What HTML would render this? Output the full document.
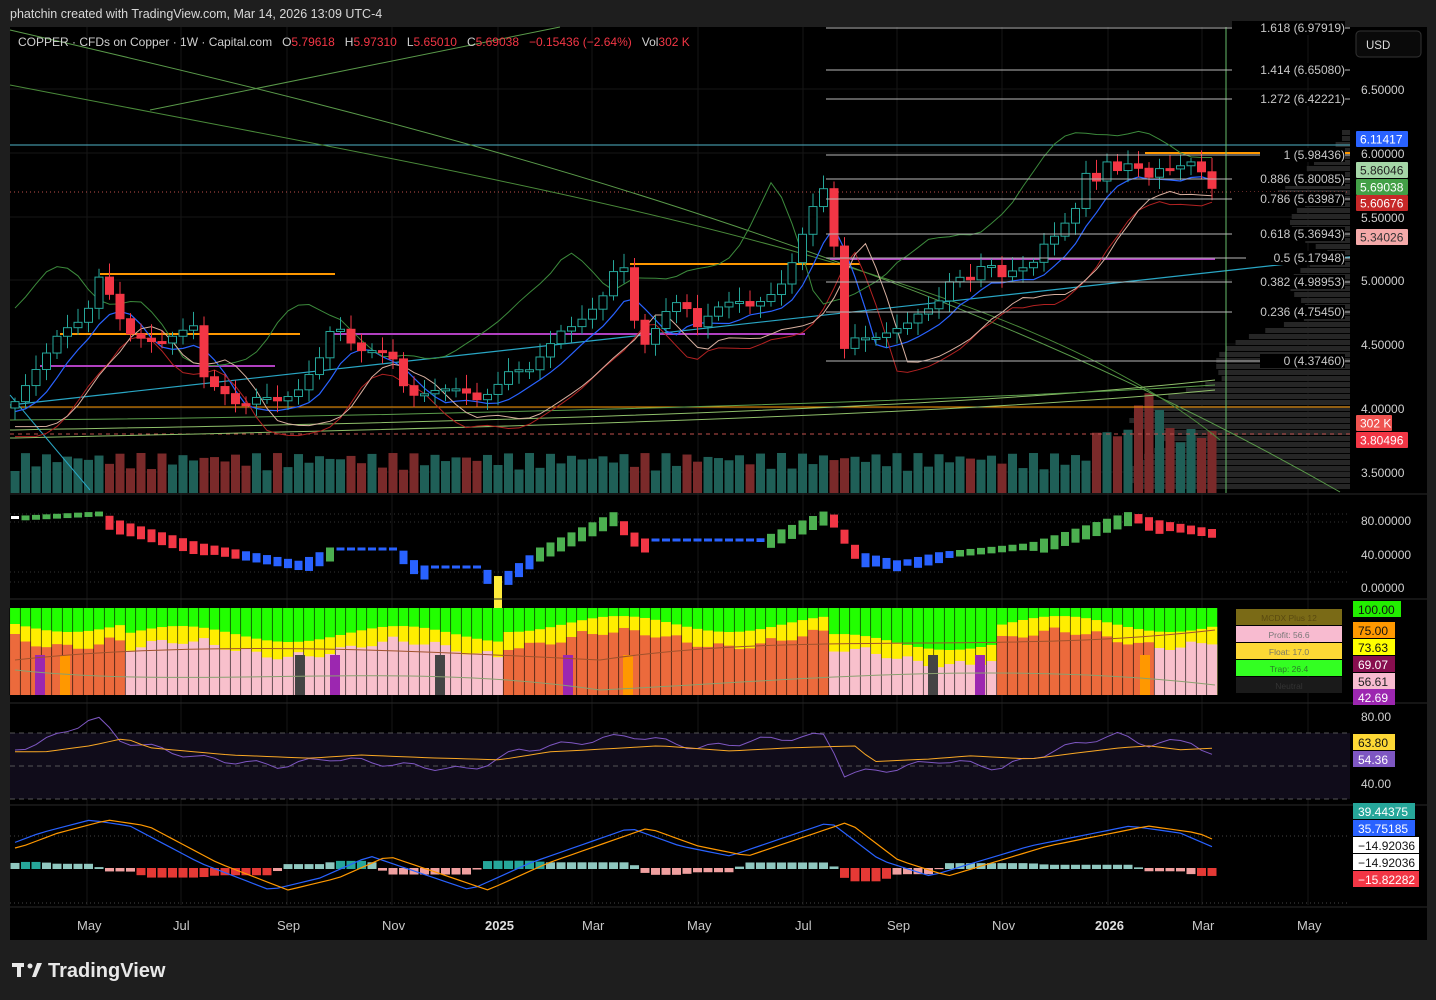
<!DOCTYPE html>
<html><head><meta charset="utf-8">
<style>
html,body{margin:0;padding:0;background:#1e1e1e;width:1436px;height:1000px;overflow:hidden;font-family:"Liberation Sans",sans-serif}
svg{position:absolute;left:0;top:0}
text{font-family:"Liberation Sans",sans-serif}
</style></head><body>
<svg id="s" width="1436" height="1000" xmlns="http://www.w3.org/2000/svg">
<rect x="0" y="0" width="1436" height="1000" fill="#1e1e1e"/>
<rect x="10" y="27" width="1417" height="913" fill="#000"/>
<text x="10" y="18" fill="#d8d8d8" font-size="12.5">phatchin created with TradingView.com, Mar 14, 2026 13:09 UTC-4</text>
<g id="grid" stroke="#161616" stroke-width="1"></g>
<g id="main"></g>
<g id="over"></g>
<g stroke="#2a2a2a" stroke-width="1">
<line x1="10" y1="494" x2="1427" y2="494"/><line x1="10" y1="599" x2="1427" y2="599"/>
<line x1="10" y1="703" x2="1427" y2="703"/><line x1="10" y1="805" x2="1427" y2="805"/>
<line x1="10" y1="907" x2="1427" y2="907"/>
</g>
<rect x="1427" y="27" width="9" height="913" fill="#1e1e1e"/>
<text x="18" y="46" fill="#d0d0d0" font-size="12" style="white-space:pre">COPPER · CFDs on Copper · 1W · Capital.com   O<tspan fill="#f23645">5.79618</tspan>   H<tspan fill="#f23645">5.97310</tspan>   L<tspan fill="#f23645">5.65010</tspan>   C<tspan fill="#f23645">5.69038   −0.15436 (−2.64%)</tspan>   Vol<tspan fill="#f23645">302 K</tspan></text>
<rect x="1356" y="31" width="65" height="26" rx="4" fill="#0a0a0a" stroke="#333"/>
<text x="1366" y="49" fill="#ddd" font-size="11.5">USD</text>
<g id="axis" font-size="12" fill="#d0d0d0"></g>
<g font-size="13" fill="#c8c8c8">
<text x="77" y="930">May</text><text x="173" y="930">Jul</text><text x="277" y="930">Sep</text><text x="382" y="930">Nov</text><text x="485" y="930" font-weight="bold" fill="#e0e0e0">2025</text><text x="582" y="930">Mar</text><text x="687" y="930">May</text><text x="795" y="930">Jul</text><text x="887" y="930">Sep</text><text x="992" y="930">Nov</text><text x="1095" y="930" font-weight="bold" fill="#e0e0e0">2026</text><text x="1192" y="930">Mar</text><text x="1297" y="930">May</text>
</g>
<rect x="12" y="963" width="12" height="4" fill="#e8e8e8"/><rect x="17" y="963" width="4" height="14" fill="#e8e8e8"/><circle cx="30" cy="966" r="2.5" fill="#e8e8e8"/><path d="M32 977 L37 963 L42 963 L36 977Z" fill="#e8e8e8"/>
<text x="48" y="977" fill="#e8e8e8" font-size="20" font-weight="bold">TradingView</text>
</svg>
<script>
var S='http://www.w3.org/2000/svg';
function el(g,t,a){var e=document.createElementNS(S,t);for(var k in a)e.setAttribute(k,a[k]);document.getElementById(g).appendChild(e);return e;}
function tx(g,x,y,s,a){var e=el(g,'text',Object.assign({x:x,y:y},a||{}));e.textContent=s;return e;}
function Y(p){return 153+(6-p)*127.5;}
function mk(arr){return function(x){if(x<=arr[0][0])return arr[0][1];for(var i=1;i<arr.length;i++){if(x<=arr[i][0]){var a=arr[i-1],b=arr[i];return a[1]+(b[1]-a[1])*(x-a[0])/(b[0]-a[0]);}}return arr[arr.length-1][1];};}
[87,181,287,392,498,592,698,803,897,1002,1108,1202,1308].forEach(function(x){el('grid','line',{x1:x,y1:27,x2:x,y2:905});});
[89,153,217,280,344,408,472].forEach(function(y){el('grid','line',{x1:10,y1:y,x2:1350,y2:y});});
for(var y=130;y<490;y+=6){var w=20+Math.abs(Math.sin(y*0.05))*40+(y>300&&y<420?(y-300)*1.4:0)+(y>=420?160:0);if(y<200)w=Math.max(8,(y-130)*1.2);el('main','rect',{x:1350-w,y:y,width:w,height:5,fill:'#262626'});}
var kp=[[15,4.05],[40,4.35],[60,4.6],[85,4.7],[100,5.05],[115,4.8],[125,4.6],[140,4.55],[160,4.5],[180,4.6],[195,4.65],[205,4.2],[220,4.15],[240,4.0],[260,4.1],[280,4.05],[300,4.15],[320,4.4],[335,4.7],[345,4.55],[360,4.45],[380,4.45],[400,4.35],[405,4.1],[420,4.1],[440,4.15],[460,4.15],[480,4.05],[500,4.2],[510,4.3],[530,4.3],[545,4.45],[560,4.6],[575,4.65],[590,4.75],[605,4.9],[615,5.1],[625,5.1],[640,4.45],[650,4.55],[665,4.75],[680,4.85],[690,4.75],[700,4.6],[710,4.75],[720,4.8],[735,4.85],[750,4.8],[765,4.85],[780,4.95],[790,5.1],[800,5.3],[810,5.55],[820,5.65],[830,5.85],[840,4.4],[850,4.55],[860,4.55],[875,4.55],[890,4.6],[905,4.65],[920,4.75],[935,4.8],[945,4.9],[955,5.1],[965,4.95],[975,5.05],[985,5.15],[995,5.1],[1005,5.0],[1015,5.1],[1025,5.1],[1035,5.15],[1045,5.3],[1055,5.35],[1065,5.45],[1075,5.55],[1085,5.85],[1095,5.75],[1105,5.95],[1115,5.85],[1125,5.9],[1135,5.95],[1145,5.75],[1155,5.9],[1165,5.85],[1175,5.9],[1185,5.9],[1195,5.95],[1205,5.8],[1215,5.69]];
var interp=mk(kp);
var prev=4.0;var closes=[];
for(var x=15;x<=1215;x+=10.5){var c=interp(x);closes.push([x,c,prev]);prev=c;}
closes.forEach(function(d,i){var up=d[1]>=d[2];var h=22+Math.abs(Math.sin(i*1.7))*18+(d[0]>1090?25:0)+(d[0]>1130&&d[0]<1160?35:0);el('main','rect',{x:d[0]-4.5,y:493-h,width:9,height:h,fill:up?'#1f5f57':'#7a2a2a'});});
el('main','line',{x1:10,y1:145,x2:1350,y2:145,stroke:'#4fb3c8','stroke-width':1});
el('main','line',{x1:10,y1:192,x2:1350,y2:192,stroke:'#c0504d','stroke-width':1,'stroke-dasharray':'1 3'});
el('main','line',{x1:10,y1:407,x2:1350,y2:407,stroke:'#ff9800','stroke-width':1});
el('main','line',{x1:10,y1:434,x2:1350,y2:434,stroke:'#c0504d','stroke-width':1,'stroke-dasharray':'4 4'});
el('main','path',{d:'M10 30 C400 120 900 240 1340 492',stroke:'#5a9a4a','stroke-width':1,fill:'none'});
el('main','path',{d:'M10 85 C500 180 1000 260 1220 440',stroke:'#4a8a3a','stroke-width':1,fill:'none'});
el('main','path',{d:'M150 110 L560 27',stroke:'#5a9a4a','stroke-width':1,fill:'none'});
el('main','path',{d:'M10 405 L1350 257',stroke:'#29a6c4','stroke-width':1.2,fill:'none'});
el('main','path',{d:'M10 430 C300 425 900 415 1215 380',stroke:'#8fbf6a','stroke-width':1,fill:'none'});
el('main','path',{d:'M10 438 C300 432 900 420 1215 390',stroke:'#8fbf6a','stroke-width':1,fill:'none'});
el('main','path',{d:'M10 420 C300 418 900 405 1215 385',stroke:'#5c9e4c','stroke-width':1,fill:'none'});
el('main','path',{d:'M10 395 L90 490',stroke:'#29a6c4','stroke-width':1,fill:'none'});
el('main','line',{x1:100,y1:274,x2:335,y2:274,stroke:'#ff9800','stroke-width':2});
el('main','line',{x1:60,y1:334,x2:300,y2:334,stroke:'#ff9800','stroke-width':2});
el('main','line',{x1:40,y1:366,x2:275,y2:366,stroke:'#b040c0','stroke-width':2});
el('main','line',{x1:330,y1:334,x2:805,y2:334,stroke:'#b040c0','stroke-width':2});
el('main','line',{x1:630,y1:264,x2:860,y2:264,stroke:'#ff9800','stroke-width':2});
el('main','line',{x1:830,y1:259,x2:1215,y2:259,stroke:'#b040c0','stroke-width':2});
el('main','line',{x1:1145,y1:153,x2:1350,y2:153,stroke:'#ff9800','stroke-width':2});
el('main','line',{x1:1226,y1:27,x2:1226,y2:493,stroke:'#66bb6a','stroke-width':1});
// smooth bands
function smooth(x,off){var s=0,n=0;for(var k=-40;k<=0;k+=5){s+=interp(x+k-off);n++;}return s/n;}
var blue='',red='',green='',pink='';
closes.forEach(function(d,i){var xs=d[0];blue+=(i?'L':'M')+xs+' '+(Y(smooth(xs,0))+10);red+=(i?'L':'M')+xs+' '+(Y(smooth(xs,20))+35);green+=(i?'L':'M')+xs+' '+(Y(smooth(xs,-60))-35);pink+=(i?'L':'M')+xs+' '+(Y(smooth(xs,30))+25);});
el('main','path',{d:blue,stroke:'#2962ff','stroke-width':1.2,fill:'none'});
el('main','path',{d:red,stroke:'#b22222','stroke-width':1,fill:'none'});
el('main','path',{d:green,stroke:'#3c8a3c','stroke-width':1,fill:'none'});
el('main','path',{d:pink,stroke:'#d8b0a0','stroke-width':1,fill:'none'});
closes.forEach(function(d,i){var o=d[2],c=d[1];var up=c>=o;var yo=Y(o),yc=Y(c);var top=Math.min(yo,yc),h=Math.max(2,Math.abs(yo-yc));var hi=top-4-Math.abs(Math.sin(i*2.3))*10,lo=top+h+4+Math.abs(Math.cos(i*1.9))*8;
el('main','line',{x1:d[0],y1:hi,x2:d[0],y2:lo,stroke:up?'#26a69a':'#f23645'});
el('main','rect',{x:d[0]-4,y:top,width:8,height:h,fill:up?'#000':'#f23645',stroke:up?'#26a69a':'#f23645','stroke-width':1});});
var fib=[['1.618 (6.97919)',28],['1.414 (6.65080)',70],['1.272 (6.42221)',99],['1 (5.98436)',155],['0.886 (5.80085)',179],['0.786 (5.63987)',199],['0.618 (5.36943)',234],['0.5 (5.17948)',258],['0.382 (4.98953)',282],['0.236 (4.75450)',312],['0 (4.37460)',361]];
fib.forEach(function(f){el('over','line',{x1:826,y1:f[1],x2:1350,y2:f[1],stroke:'#b8b8b8','stroke-width':1});var w=f[0].length*7+8;el('over','rect',{x:1345-w,y:f[1]-7,width:w,height:14,fill:'#000'});tx('over',1345,f[1]+4,f[0],{fill:'#c8c8c8','font-size':12,'text-anchor':'end'});});
[['6.50000',89],['6.00000',153],['5.50000',217],['5.00000',280],['4.50000',344],['4.00000',408],['3.50000',472]].forEach(function(a){tx('axis',1361,a[1]+5,a[0],{});});
function tag(x,y,w,bg,fg,s){el('axis','rect',{x:x,y:y-8,width:w,height:16,fill:bg,rx:1});tx('axis',x+4,y+4.5,s,{fill:fg});}
tag(1356,139,52,'#2962ff','#fff','6.11417');tag(1356,170,52,'#a5d6a7','#222','5.86046');tag(1356,187,52,'#43a047','#fff','5.69038');tag(1356,203,52,'#c62828','#fff','5.60676');tag(1356,237,52,'#f4a9a9','#333','5.34026');tag(1356,423,36,'#ef5350','#fff','302 K');tag(1356,440,52,'#f23645','#fff','3.80496');
// pane2
var ip2=mk([[15,80],[100,85],[120,75],[200,50],[250,40],[300,30],[330,45],[400,45],[420,25],[480,25],[500,12],[540,45],[615,85],[640,55],[760,55],[830,88],[860,40],[900,30],[940,40],[1030,50],[1130,85],[1160,75],[1215,65]]);
[514,522,572,582].forEach(function(y){el('over','line',{x1:10,y1:y,x2:1350,y2:y,stroke:'#333','stroke-dasharray':'1 3'});});
var pv=80;closes.forEach(function(d){var v=ip2(d[0]);var up=v>=pv;var col=up?'#4caf50':'#f23645';if(v<42)col='#2962ff';if(Math.abs(v-pv)<0.6)col=v>60?'#fff':'#2962ff';if(d[0]>490&&d[0]<505)col='#ffeb3b';var y=588-v*0.9;var h=d[0]>490&&d[0]<505?40:Math.min(14,3+Math.abs(v-pv)*3);el('over','rect',{x:d[0]-4,y:y,width:8,height:h,fill:col});pv=v;});
[['80.00000',521],['40.00000',555],['0.00000',588]].forEach(function(a){tx('axis',1361,a[1]+4,a[0],{});});
// MCDX
closes.forEach(function(d,i){var x=d[0]-5.25,w=10.5;var yl=624+Math.sin(i*0.3)*8+(d[0]>830&&d[0]<1000?18:0)+(d[0]>120&&d[0]<500?10:0);var rt=yl+10+Math.abs(Math.sin(i*0.7))*8;
var pinkz=(d[0]>130&&d[0]<500)||(d[0]>830&&d[0]<1000)||d[0]>1150;
el('over','rect',{x:x,y:608,width:w,height:87,fill:'#22ff00'});el('over','rect',{x:x,y:yl,width:w,height:695-yl,fill:'#ffee00'});
el('over','rect',{x:x,y:rt,width:w,height:695-rt,fill:pinkz?'#f8c0cc':'#ec6a3c'});
el('over','line',{x1:x,y1:608,x2:x,y2:695,stroke:'#000','stroke-width':0.6});});
[[40,'#9c27b0'],[300,'#444'],[335,'#9c27b0'],[440,'#444'],[568,'#9c27b0'],[628,'#ff9800'],[65,'#ff9800'],[933,'#444'],[980,'#9c27b0'],[1145,'#ff9800']].forEach(function(a){el('over','rect',{x:a[0]-5,y:655,width:10,height:40,fill:a[1]});});
el('over','path',{d:'M15 660 C200 640 400 650 600 660 C800 630 1000 655 1215 630',stroke:'#a0522d','stroke-width':1,fill:'none'});
el('over','path',{d:'M15 670 C200 690 400 660 600 690 C800 680 1000 660 1215 685',stroke:'#8aa070','stroke-width':1,fill:'none'});
function box(y,bg,fg,s){el('over','rect',{x:1236,y:y,width:106,height:16,fill:bg});tx('over',1289,y+12,s,{fill:fg,'font-size':8.5,'text-anchor':'middle'});}
box(609,'#7a6a16','#5a4a10','MCDX Plus 12');box(626,'#f8bbd0','#777','Profit: 56.6');box(643,'#fdd835','#776','Float: 17.0');box(660,'#33ff22','#2a7a2a','Trap: 26.4');box(677,'#1a1a1a','#333','Neutral');
function tag2(y,w,bg,fg,s){el('axis','rect',{x:1353,y:y-8,width:w,height:16,fill:bg});tx('axis',1358,y+5,s,{fill:fg});}
tag2(609,48,'#22ee00','#111','100.00');tag2(630,42,'#ff9800','#111','75.00');tag2(647,42,'#ffff00','#111','73.63');tag2(664,42,'#880e4f','#fff','69.07');tag2(681,42,'#f8bbd0','#222','56.61');tag2(697,42,'#9c27b0','#fff','42.69');
// RSI
el('over','rect',{x:10,y:733,width:1340,height:66,fill:'#100c1a'});
[733,766,799].forEach(function(y){el('over','line',{x1:10,y1:y,x2:1350,y2:y,stroke:'#555','stroke-dasharray':'5 4'});});
var rsi=mk([[15,750],[60,735],[95,716],[120,740],[200,758],[280,766],[330,758],[400,765],[470,770],[520,750],[560,745],[630,735],[700,748],[760,740],[830,735],[840,775],[900,768],[940,760],[1000,768],[1050,752],[1090,740],[1120,735],[1150,745],[1190,740],[1215,758]]);
var rs='',rm='';closes.forEach(function(d,i){rs+=(i?'L':'M')+d[0]+' '+(rsi(d[0])+Math.sin(i*1.3)*3);rm+=(i?'L':'M')+d[0]+' '+(rsi(d[0]-30)*0.4+753*0.6);});
el('over','path',{d:rs,stroke:'#7e57c2','stroke-width':1,fill:'none'});el('over','path',{d:rm,stroke:'#f9a825','stroke-width':1,fill:'none'});
tx('axis',1361,721,'80.00',{});tx('axis',1361,788,'40.00',{});
tag2(742,42,'#fdd835','#111','63.80');tag2(759,42,'#7e57c2','#fff','54.36');
// MACD
el('over','line',{x1:10,y1:836,x2:1350,y2:836,stroke:'#444','stroke-dasharray':'1 3'});el('over','line',{x1:10,y1:903,x2:1350,y2:903,stroke:'#444','stroke-dasharray':'1 3'});
var mv=mk([[0,20],[40,35],[90,48],[130,42],[200,5],[270,-22],[320,-10],[370,12],[420,-5],[470,-22],[530,5],[630,40],[680,22],[730,12],[830,46],[880,8],[930,-8],[1030,22],[1130,42],[1180,35],[1215,20]]);
var m1='',m2='';closes.forEach(function(d,i){var a=mv(d[0]),b=mv(d[0]-18);m1+=(i?'L':'M')+d[0]+' '+(868-a);m2+=(i?'L':'M')+d[0]+' '+(868-b);var h=(a-b)*0.9;h=Math.max(-26,Math.min(20,h));var col=h>0?(h>6?'#26a69a':'#8fc7bf'):(h<-6?'#e53935':'#f0a0a0');el('over','rect',{x:d[0]-4.5,y:h>0?868-h:868,width:9,height:Math.abs(h)+1,fill:col});});
el('over','path',{d:m1,stroke:'#2962ff','stroke-width':1.2,fill:'none'});el('over','path',{d:m2,stroke:'#ff9800','stroke-width':1.2,fill:'none'});
tag2(811,62,'#26a69a','#fff','39.44375');tag2(828,62,'#2962ff','#fff','35.75185');tag2(845,66,'#fff','#111','−14.92036');tag2(862,66,'#fff','#111','−14.92036');tag2(879,66,'#f23645','#fff','−15.82282');
</script>
</body></html>
